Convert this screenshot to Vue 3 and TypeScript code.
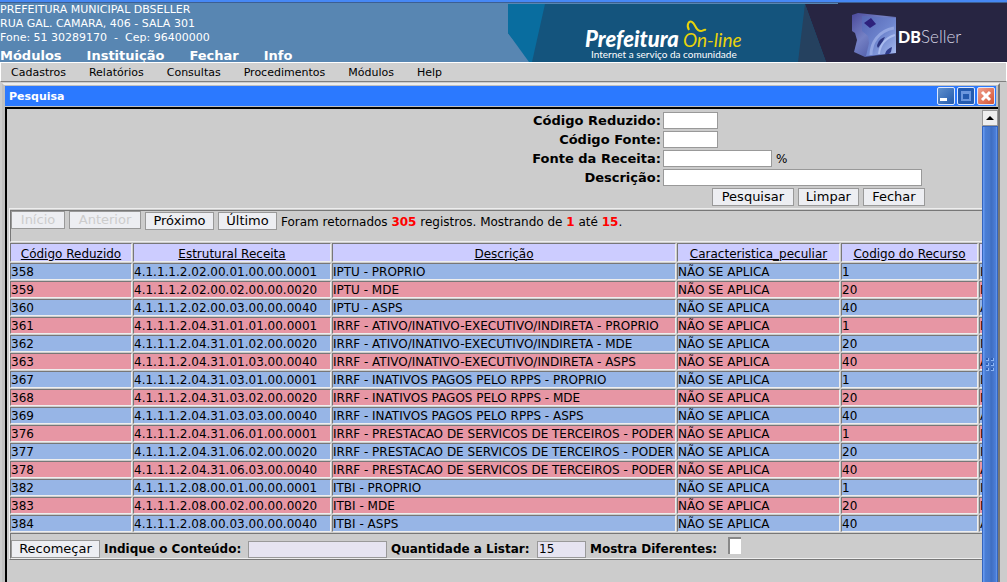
<script setup lang="ts">
interface Row {
  code: string
  account: string
  description: string
  resource: string
}

const mainLinks: string[] = ['Módulos', 'Instituição', 'Fechar', 'Info']
const menuItems: string[] = ['Cadastros', 'Relatórios', 'Consultas', 'Procedimentos', 'Módulos', 'Help']
const columns: string[] = ['Código Reduzido', 'Estrutural Receita', 'Descrição', 'Caracteristica_peculiar', 'Codigo do Recurso']
const resourceNames: Record<string, string> = { '1': 'LIVRE', '20': 'MDE', '40': 'ASPS' }

const rows: Row[] = [
  ['358', '02.00.01.00.00.0001', 'IPTU - PROPRIO', '1'],
  ['359', '02.00.02.00.00.0020', 'IPTU - MDE', '20'],
  ['360', '02.00.03.00.00.0040', 'IPTU - ASPS', '40'],
  ['361', '04.31.01.01.00.0001', 'IRRF - ATIVO/INATIVO-EXECUTIVO/INDIRETA - PROPRIO', '1'],
  ['362', '04.31.01.02.00.0020', 'IRRF - ATIVO/INATIVO-EXECUTIVO/INDIRETA - MDE', '20'],
  ['363', '04.31.01.03.00.0040', 'IRRF - ATIVO/INATIVO-EXECUTIVO/INDIRETA - ASPS', '40'],
  ['367', '04.31.03.01.00.0001', 'IRRF - INATIVOS PAGOS PELO RPPS - PROPRIO', '1'],
  ['368', '04.31.03.02.00.0020', 'IRRF - INATIVOS PAGOS PELO RPPS - MDE', '20'],
  ['369', '04.31.03.03.00.0040', 'IRRF - INATIVOS PAGOS PELO RPPS - ASPS', '40'],
  ['376', '04.31.06.01.00.0001', 'IRRF - PRESTACAO DE SERVICOS DE TERCEIROS - PODER', '1'],
  ['377', '04.31.06.02.00.0020', 'IRRF - PRESTACAO DE SERVICOS DE TERCEIROS - PODER', '20'],
  ['378', '04.31.06.03.00.0040', 'IRRF - PRESTACAO DE SERVICOS DE TERCEIROS - PODER', '40'],
  ['382', '08.00.01.00.00.0001', 'ITBI - PROPRIO', '1'],
  ['383', '08.00.02.00.00.0020', 'ITBI - MDE', '20'],
  ['384', '08.00.03.00.00.0040', 'ITBI - ASPS', '40'],
].map(([code, account, description, resource]) => ({
  code,
  account: '4.1.1.1.2.' + account,
  description,
  resource,
}))
</script>

<template>
  <div class="page">
    <header class="top">
      <div class="identity">
        <address class="office">
          <span>PREFEITURA MUNICIPAL DBSELLER</span>
          <span>RUA GAL. CAMARA, 406 - SALA 301</span>
          <span>Fone: 51 30289170 &nbsp;- &nbsp;Cep: 96400000</span>
        </address>
        <nav class="main-nav">
          <a v-for="link in mainLinks" :key="link" href="#">{{ link }}</a>
        </nav>
      </div>
      <svg class="banner" viewBox="0 0 499 59" width="499" height="59" role="img" aria-label="Prefeitura On-line - DBSeller">
        <defs>
          <linearGradient id="cubeFront" x1="0" y1="0" x2="1" y2="1">
            <stop offset="0" stop-color="#5566b4" />
            <stop offset="0.55" stop-color="#6f86cf" />
            <stop offset="1" stop-color="#a9bcee" />
          </linearGradient>
          <linearGradient id="cubeSide" x1="0" y1="0" x2="1" y2="1">
            <stop offset="0" stop-color="#4a489a" />
            <stop offset="0.4" stop-color="#7480c4" />
            <stop offset="1" stop-color="#303e91" />
          </linearGradient>
        </defs>
        <path d="M0 1H499V59H24L0 30Z" fill="#14547d" />
        <path d="M0 1H37L24 59H21L0 30Z" fill="#096d9f" />
        <path d="M297 1H330V0H499V59H318Z" fill="#272542" />
        <path d="M297 1L290 59H318Z" fill="#25415f" />
        <text x="77" y="44" class="brand">Prefeitura</text>
        <text x="175" y="44" class="online">On-line</text>
        <path d="M181 27C178 22 181 17 184 19C188 21 187 28 193 28C195 28 196 26 198 27" fill="none" stroke="#e9d30a" stroke-width="2" />
        <text x="83" y="55" class="tagline">Internet a serviço da comunidade</text>
        <path d="M344 12L350 10L388 14V50L357 54L346 49L349 37L347 30L344 28Z" fill="url(#cubeSide)" />
        <path d="M354 13L388 15V50L358 53L361 40L360 33L354 28Z" fill="url(#cubeFront)" />
        <path d="M363 15L368 21L362 25L356 20Z" fill="#2d217c" />
        <path d="M363 52C363 40 370 28 386 25" fill="none" stroke="#93a6e2" stroke-width="3" />
        <path d="M371 51C372 42 377 35 387 32" fill="none" stroke="#a9bbee" stroke-width="2" />
        <path d="M369 43C370 38 373 35 377 34L375 38L370 45Z" fill="#2b3480" />
        <path d="M377 51C378 47 381 45 384 44L383 49L381 51Z" fill="#2f3c8c" />
        <text x="390" y="40" class="db">DB</text>
        <text x="413" y="40" class="seller">Seller</text>
      </svg>
    </header>

    <nav class="menu">
      <a v-for="item in menuItems" :key="item" href="#">{{ item }}</a>
    </nav>

    <section class="window">
      <div class="titlebar">
        <h1>Pesquisa</h1>
        <div class="controls">
          <button type="button" aria-label="Minimizar">
            <svg viewBox="0 0 16 16"><rect x="2" y="10" width="7" height="3" fill="#fff" /></svg>
          </button>
          <button type="button" class="max" aria-label="Maximizar">
            <svg viewBox="0 0 16 16"><path d="M3 3H13V13H3ZM5 6V11H11V6Z" fill="#6b97de" fill-rule="evenodd" /></svg>
          </button>
          <button type="button" class="close" aria-label="Fechar janela">
            <svg viewBox="0 0 16 16"><path d="M4 4L12 12M12 4L4 12" stroke="#fff" stroke-width="3" /></svg>
          </button>
        </div>
      </div>

      <div class="frame">
        <main class="content">
          <form class="search" @submit.prevent>
            <label for="reduzido">Código Reduzido:</label>
            <div><input id="reduzido" class="short" type="text" /></div>
            <label for="fonte">Código Fonte:</label>
            <div><input id="fonte" class="short" type="text" /></div>
            <label for="receita">Fonte da Receita:</label>
            <div><input id="receita" class="medium" type="text" /><span class="percent">%</span></div>
            <label for="descricao">Descrição:</label>
            <div><input id="descricao" class="long" type="text" /></div>
            <div class="actions">
              <button class="btn submit" type="submit">Pesquisar</button>
              <button class="btn reset" type="reset">Limpar</button>
              <button class="btn dismiss" type="button">Fechar</button>
            </div>
          </form>

          <div class="results">
            <div class="cell pager">
              <button class="btn first" type="button" disabled>Início</button>
              <button class="btn previous" type="button" disabled>Anterior</button>
              <button class="btn next" type="button">Próximo</button>
              <button class="btn last" type="button">Último</button>
              <span>Foram retornados <b>305</b> registros. Mostrando de <b>1</b> até <b>15</b>.</span>
            </div>
            <table>
              <colgroup>
                <col class="c1" /><col class="c2" /><col /><col class="c4" /><col class="c5" /><col class="c6" />
              </colgroup>
              <thead>
                <tr>
                  <th v-for="column in columns" :key="column" scope="col"><a href="#">{{ column }}</a></th>
                  <th scope="col"></th>
                </tr>
              </thead>
              <tbody>
                <tr v-for="row in rows" :key="row.code">
                  <td>{{ row.code }}</td>
                  <td>{{ row.account }}</td>
                  <td>{{ row.description }}</td>
                  <td>NÃO SE APLICA</td>
                  <td>{{ row.resource }}</td>
                  <td>{{ resourceNames[row.resource] }}</td>
                </tr>
              </tbody>
            </table>
            <div class="cell filter">
              <button class="btn restart" type="button">Recomeçar</button>
              <div class="field">
                <label class="l1" for="conteudo">Indique o Conteúdo:</label>
                <input id="conteudo" class="tinted wide" type="text" />
              </div>
              <div class="field">
                <label class="l2" for="quantidade">Quantidade a Listar:</label>
                <input id="quantidade" class="tinted narrow" type="text" value="15" />
              </div>
              <label class="l3" for="diferentes">Mostra Diferentes:</label>
              <input id="diferentes" class="check" type="checkbox" />
            </div>
          </div>
        </main>

        <div class="scrollbar">
          <button type="button" aria-label="Rolar para cima">
            <svg viewBox="0 0 14 14" width="14" height="14"><path d="M7 5L11 9H3Z" fill="#000" /></svg>
          </button>
          <div class="thumb">
            <svg viewBox="0 0 8 13" width="8" height="13">
              <g fill="#8db5f5">
                <rect x="0" y="0" width="3" height="3" /><rect x="5" y="0" width="3" height="3" />
                <rect x="0" y="5" width="3" height="3" /><rect x="5" y="5" width="3" height="3" />
                <rect x="0" y="10" width="3" height="3" /><rect x="5" y="10" width="3" height="3" />
              </g>
              <g fill="#2d5eb5">
                <rect x="0" y="0" width="2" height="2" /><rect x="5" y="0" width="2" height="2" />
                <rect x="0" y="5" width="2" height="2" /><rect x="5" y="5" width="2" height="2" />
                <rect x="0" y="10" width="2" height="2" /><rect x="5" y="10" width="2" height="2" />
              </g>
            </svg>
          </div>
        </div>
      </div>
    </section>
  </div>
</template>

<style>
body {
  margin: 0;
  background: #ccc;
}
</style>

<style scoped>
* {
  box-sizing: border-box;
}

.page {
  display: flex;
  flex-direction: column;
  height: 100vh;
  overflow: hidden;
  font-family: "DejaVu Sans", sans-serif;
  font-size: 12px;
  color: #000;
}

a {
  color: inherit;
}

input,
button {
  margin: 0;
  font: inherit;
  border-radius: 0;
}

.top {
  display: flex;
  justify-content: space-between;
  flex: none;
  height: 62px;
  border-top: 2px solid #4688f5;
  box-shadow: inset 0 1px #3c5f92;
  background: #5886b2;
  color: #fff;
}

.banner {
  flex: none;
  margin-top: 1px;
}

.brand,
.online {
  font: italic 900 22px Lato, sans-serif;
  fill: #fff;
}

.online {
  font-weight: 400;
  font-size: 19px;
  fill: #e9d30a;
}

.tagline {
  font: 400 10px Lato, sans-serif;
  fill: #fff;
}

.db,
.seller {
  font: 900 16px Lato, sans-serif;
  fill: #fff;
}

.seller {
  font-weight: 300;
  font-size: 17px;
  fill: #d5d4e2;
}

.office {
  display: flex;
  flex-direction: column;
  padding-top: 1px;
  font-style: normal;
  font-size: 11px;
  line-height: 14px;
  white-space: nowrap;
}

.main-nav {
  display: flex;
  gap: 25px;
  margin-top: 3px;
  font-size: 13px;
  font-weight: bold;
  line-height: 15px;
}

.main-nav a,
.menu a {
  text-decoration: none;
}

.menu {
  display: flex;
  flex: none;
  gap: 23px;
  height: 20px;
  padding-left: 10px;
  border: 1px solid #fff;
  border-bottom-color: #808080;
  background: #d0d0d0;
  font-size: 11px;
  line-height: 19px;
}

.window {
  display: flex;
  flex: 1;
  flex-direction: column;
  min-height: 0;
  margin: 1px 7px 0 2px;
  border: 2px solid #c0c0c0;
  border-top-color: #eee;
  border-right-color: #777;
  border-bottom: 0;
  background: #c0c0c0;
}

.titlebar {
  display: flex;
  justify-content: space-between;
  align-items: center;
  flex: none;
  height: 20px;
  margin: 1px 2px 1px 1px;
  padding: 0 1px 0 4px;
  background: #2b79ff;
  color: #fff;
}

h1 {
  margin: 0;
  font-size: 11px;
}

.controls {
  display: flex;
  gap: 2px;
}

.controls button {
  width: 18px;
  height: 18px;
  padding: 0;
  border: 1px solid #dce8ff;
  border-radius: 2px;
  background: linear-gradient(135deg, #6090cd, #235aac);
}

.controls button.max {
  background: #235aaf;
}

.controls button.close {
  background: linear-gradient(135deg, #f0a18e, #d55231);
}

.controls svg {
  display: block;
}

.frame {
  display: flex;
  flex: 1;
  min-height: 0;
  margin-left: 1px;
  border: solid #000;
  border-width: 2px 0 0 2px;
  background: #ccc;
}

.content {
  flex: 1;
  min-width: 0;
  padding: 3px 0 0 2px;
  overflow: hidden;
}

.search {
  display: grid;
  grid-template-columns: 67% 1fr;
  align-content: start;
  gap: 2px;
  height: 96px;
  font-size: 13px;
  line-height: 17px;
}

.search label {
  font-weight: bold;
  text-align: right;
}

.search div {
  display: flex;
}

.search input,
.filter .tinted {
  height: 17px;
  padding: 0 1px;
  border: 1px solid #999;
  background: #fff;
}

.search .short {
  width: 55px;
}

.search .medium {
  width: 109px;
}

.search .long {
  width: 259px;
}

.percent {
  align-self: flex-end;
  padding-left: 4px;
  font-size: 12px;
  line-height: 15px;
}

.search .actions {
  grid-column: 2;
  gap: 4px;
  padding-left: 49px;
}

.btn {
  flex: none;
  height: 18px;
  padding: 0;
  border: 1px solid #999;
  background: #edeef2;
  color: #000;
  font-size: 13px;
  line-height: 16px;
  text-align: center;
}

.btn:disabled {
  color: #ccc;
}

.first { width: 54px; }
.previous { width: 72px; }
.next { width: 69px; }
.last { width: 59px; }
.submit { width: 82px; }
.reset { width: 61px; }
.dismiss { width: 62px; }
.restart { width: 89px; }

.results {
  width: calc(100% + 150px);
  padding-top: 1px;
  border: 1px solid #eee;
  border-bottom-color: #777;
}

.cell {
  display: flex;
  gap: 4px;
  border: 1px solid #777;
  border-right-color: #eee;
  border-bottom-color: #eee;
  white-space: nowrap;
}

.pager {
  height: 32px;
  line-height: 22px;
}

.pager .btn {
  margin-top: 1px;
}

.pager .btn:disabled {
  margin-top: 0;
}

.pager b {
  color: #f00;
}

table {
  width: 100%;
  table-layout: fixed;
  border-collapse: separate;
  border-spacing: 1px;
  margin: 0 -1px;
}

.c1 { width: 122px; }
.c2 { width: 198px; }
.c4 { width: 163px; }
.c5 { width: 137px; }
.c6 { width: 150px; }

th,
td {
  height: 17px;
  padding: 1px 0 0;
  border: 1px solid #777;
  border-right-color: #eee;
  border-bottom-color: #eee;
  line-height: 14px;
  text-align: left;
  white-space: nowrap;
  overflow: hidden;
}

th {
  height: 19px;
  padding-top: 2px;
  background: #ccf;
  font-weight: normal;
  text-align: center;
}

tbody td {
  background: #97b5e6;
}

tbody tr:nth-child(even) td {
  background: #e796a4;
}

.filter {
  align-items: flex-end;
  height: 26px;
  line-height: 17px;
}

.filter .field {
  display: flex;
}

.filter label {
  font-weight: bold;
}

.l1 { width: 144px; }
.l2 { width: 146px; }
.l3 { width: 134px; }

.filter .tinted {
  background: #e6e4f1;
}

.filter .wide {
  width: 139px;
}

.filter .narrow {
  width: 49px;
}

.filter .check {
  appearance: none;
  align-self: flex-start;
  width: 13px;
  height: 17px;
  margin-top: 3px;
  border: solid #888;
  border-width: 2px 0 0 2px;
  background: #fff;
}

.scrollbar {
  display: flex;
  flex: none;
  flex-direction: column;
  width: 16px;
  padding-top: 1px;
  background: #c0c0c0;
}

.scrollbar button {
  flex: none;
  width: 16px;
  height: 16px;
  padding: 0;
  border: 1px solid #fff;
  outline: 1px solid #999;
  outline-offset: -1px;
  background: #eee;
}

.scrollbar button svg {
  display: block;
}

.thumb {
  display: flex;
  align-items: center;
  justify-content: center;
  flex: 1;
  padding-top: 20px;
  border: 1px solid #3565bd;
  border-bottom: 0;
  background: linear-gradient(to right, #6598ef 1px, #4a7ed5 2px, #4677cc 7px, #3f6dc0 8px, #4d80db 13px, #70a3f5 14px);
}
</style>
